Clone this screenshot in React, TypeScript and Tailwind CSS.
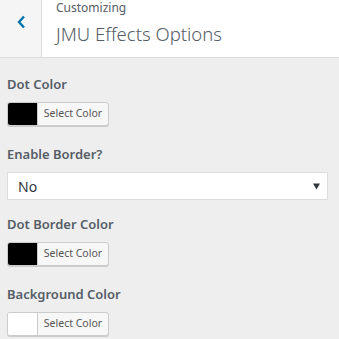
import React from 'react';

const font = { fontFamily: '"Noto Sans", "Open Sans", sans-serif' };

const Label: React.FC<{ children: React.ReactNode }> = ({ children }) => (
  <div className="text-[13px] font-semibold text-[#555d66] leading-[18px] mb-[9px]">{children}</div>
);

const ColorControl: React.FC<{ label: string; color: string }> = ({ label, color }) => (
  <div className="h-[70px]">
    <Label>{label}</Label>
    <div className="flex w-[102px] h-[24px] border border-[#ccc] rounded-[3px] overflow-hidden bg-[#f7f7f7] shadow-[0_1px_0_#ccc]">
      <div className="w-[30px] h-full border-r border-[#ccc]" style={{ background: color }}></div>
      <div className="flex-1 flex items-center justify-center text-[10.5px] text-[#555]">Select Color</div>
    </div>
  </div>
);

export default function App() {
  return (
    <div className="w-[339px] h-[339px] bg-[#eeeeee] overflow-hidden" style={font}>
      {/* Header */}
      <div className="flex h-[58px] bg-white border-b border-[#ddd]">
        <div className="w-[42px] bg-[#f5f5f5] border-r border-[#ddd] flex items-start justify-center pt-[15px]">
          <svg width="10" height="14" viewBox="0 0 10 14">
            <path d="M8 1.5 L3 7 L8 12.5" stroke="#0073aa" strokeWidth="2.4" fill="none" />
          </svg>
        </div>
        <div className="pl-[14px]">
          <div className="text-[12px] text-[#555d66] leading-[16px]">Customizing</div>
          <div className="text-[18.5px] font-light text-[#555d66] leading-[26px] mt-[5px]">JMU Effects Options</div>
        </div>
      </div>

      <div className="px-[7px] pt-[17px]">
        <ColorControl label="Dot Color" color="#000" />

        <div className="h-[70px]">
          <Label>Enable Border?</Label>
          <div className="w-[321px] h-[28px] bg-white border border-[#ddd] flex items-center justify-between pl-[10px] pr-[7px]">
            <span className="text-[14px] text-[#32373c]">No</span>
            <svg width="7" height="7" viewBox="0 0 7 7">
              <path d="M0 0.5 L7 0.5 L3.5 6.5 Z" fill="#32373c" />
            </svg>
          </div>
        </div>

        <ColorControl label="Dot Border Color" color="#000" />
        <ColorControl label="Background Color" color="#fff" />
      </div>
    </div>
  );
}
